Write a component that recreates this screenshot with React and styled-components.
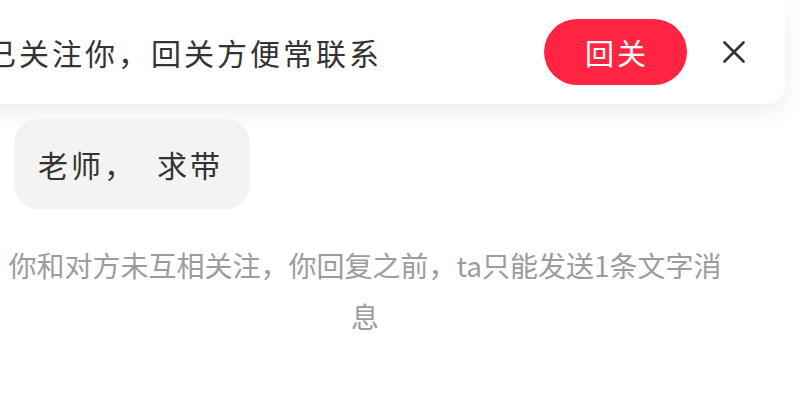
import React from 'react';
import styled, { createGlobalStyle } from 'styled-components';

const GlobalStyle = createGlobalStyle`
  html, body {
    margin: 0;
    padding: 0;
    background: #ffffff;
  }
  body {
    font-family: "Noto Sans CJK SC", "Noto Sans", sans-serif;
    overflow: hidden;
  }
`

const Page = styled.div`
  width: 800px;
  height: 418px;
  overflow: hidden;
  display: flex;
  flex-direction: column;
  align-items: flex-start;
`

const FollowCard = styled.div`
  box-sizing: border-box;
  width: 825px;
  height: 104px;
  margin-left: -40px;
  padding: 0 40px 0 26px;
  display: flex;
  align-items: center;
  background: #ffffff;
  border-radius: 0 0 18px 18px;
  box-shadow: 0 8px 22px rgba(0, 0, 0, 0.07);
`

const FollowText = styled.span`
  flex: 1;
  font-size: 30px;
  letter-spacing: 3px;
  color: #333333;
  white-space: nowrap;
`

const FollowBackButton = styled.button`
  width: 143px;
  height: 66px;
  border: none;
  border-radius: 33px;
  background: #ff2442;
  color: #ffffff;
  font-family: inherit;
  font-size: 29px;
  letter-spacing: 3px;
  padding: 0 0 0 3px;
  cursor: pointer;
`

const CloseButton = styled.button`
  margin-left: 36px;
  width: 22px;
  height: 22px;
  padding: 0;
  border: none;
  background: none;
  display: flex;
  cursor: pointer;
`

const Bubble = styled.div`
  margin: 15px 0 0 14px;
  height: 90px;
  padding: 0 27px 0 24px;
  display: flex;
  align-items: center;
  background: #f3f3f3;
  border-radius: 24px;
  font-size: 30px;
  letter-spacing: 3px;
  color: #333333;
`

const Pause = styled.span`
  margin-right: 20px;
`

const Notice = styled.p`
  width: 730px;
  margin: 31px 0 0 0;
  font-size: 28px;
  line-height: 51px;
  color: #9c9c9c;
  text-align: center;
`

function CloseIcon() {
    return (
        <svg width="22" height="22" viewBox="0 0 22 22" fill="none">
            <path d="M1.5 1.5 L20.5 20.5 M20.5 1.5 L1.5 20.5" stroke="#333333" strokeWidth="2.6" strokeLinecap="round" />
        </svg>
    )
}

export default function App() {
    return (
        <Page>
            <GlobalStyle />
            <FollowCard>
                <FollowText>已关注你，回关方便常联系</FollowText>
                <FollowBackButton>回关</FollowBackButton>
                <CloseButton aria-label="关闭">
                    <CloseIcon />
                </CloseButton>
            </FollowCard>
            <Bubble>
                老师<Pause>，</Pause>求带
            </Bubble>
            <Notice>你和对方未互相关注，你回复之前，ta只能发送1条文字消息</Notice>
        </Page>
    )
}
